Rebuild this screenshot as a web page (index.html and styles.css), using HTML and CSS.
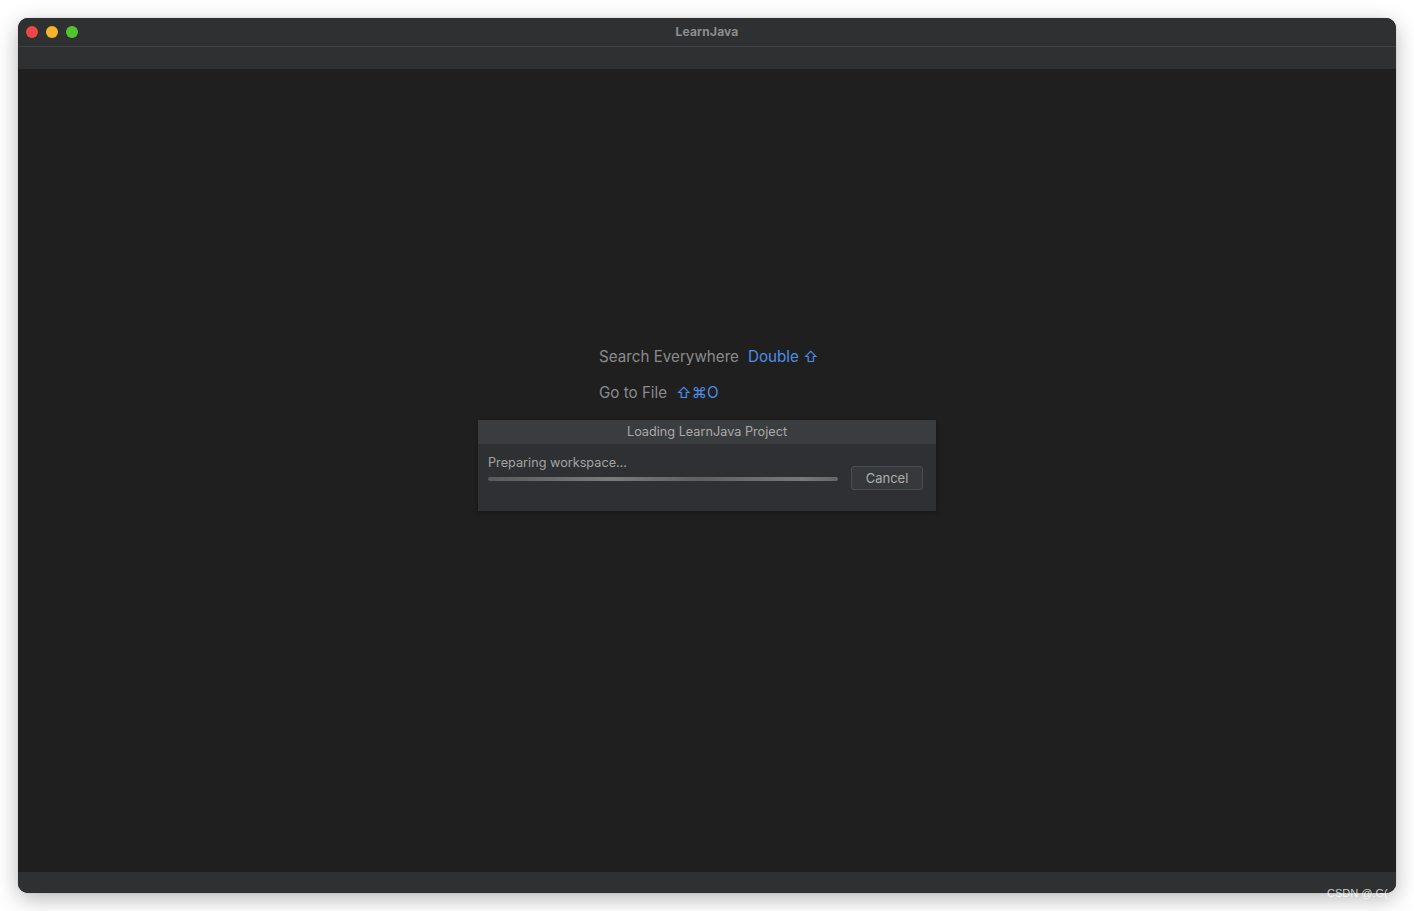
FILE: index.html
```html
<!DOCTYPE html>
<html>
<head>
<meta charset="utf-8">
<link rel="stylesheet" href="styles.css">
</head>
<body>
<div class="window">
  <div class="titlebar">
    <div class="lights">
      <span class="light red"></span>
      <span class="light yellow"></span>
      <span class="light green"></span>
    </div>
    <div class="title">LearnJava</div>
  </div>
  <div class="toolbar"></div>
  <div class="content">
    <div class="hints">
      <div class="hint"><span class="label">Search Everywhere</span><span class="key">Double ⇧</span></div>
      <div class="hint"><span class="label">Go to File</span><span class="key">⇧⌘O</span></div>
    </div>
    <div class="dialog">
      <div class="dialog-head">Loading LearnJava Project</div>
      <div class="dialog-body">
        <div class="progress-col">
          <div class="status">Preparing workspace...</div>
          <div class="bar"></div>
        </div>
        <button class="cancel">Cancel</button>
      </div>
    </div>
  </div>
  <div class="statusbar"></div>
</div>
<div class="watermark">CSDN @.G(</div>
</body>
</html>
```
FILE: styles.css
```css
html, body {
  margin: 0;
  padding: 0;
  background: #ffffff;
  width: 1414px;
  height: 911px;
  overflow: hidden;
  font-family: "Inter", "Liberation Sans", sans-serif;
}
body {
  padding: 18px;
  box-sizing: border-box;
  position: relative;
}
.window {
  width: 1378px;
  height: 875px;
  border-radius: 10px;
  overflow: hidden;
  display: flex;
  flex-direction: column;
  box-shadow: 0 6px 22px rgba(0,0,0,0.28), 0 0 1px rgba(0,0,0,0.4);
  background: #1f1f1f;
}
.titlebar {
  height: 28px;
  background: #2f3032;
  border-bottom: 1px solid #404143;
  position: relative;
  display: flex;
  align-items: center;
  justify-content: center;
  flex-shrink: 0;
}
.lights {
  position: absolute;
  left: 8px;
  top: 8px;
  display: flex;
  gap: 8px;
}
.light {
  width: 12px;
  height: 12px;
  border-radius: 50%;
  display: block;
}
.red { background: #ec4645; }
.yellow { background: #f6b42a; }
.green { background: #52c42e; }
.title {
  font-size: 12px;
  font-weight: 700;
  color: #8e8e8e;
  letter-spacing: 0.2px;
  margin-top: -1px;
}
.toolbar {
  height: 22px;
  background: #2f3032;
  flex-shrink: 0;
}
.content {
  flex: 1;
  background: #1f1f1f;
  display: flex;
  flex-direction: column;
  align-items: center;
  padding-top: 277px;
}
.hints {
  display: flex;
  flex-direction: column;
  gap: 14px;
  width: 216px;
}
.hint {
  font-size: 15.2px;
  line-height: 22px;
  color: #8a8b8c;
  white-space: nowrap;
}
.label { margin-right: 9px; }
.key { color: #4d8ee6; }
.dialog {
  margin-top: 16px;
  width: 458px;
  height: 91px;
  background: #2e3033;
  box-shadow: 0 1px 4px rgba(0,0,0,0.35);
  display: flex;
  flex-direction: column;
}
.dialog-head {
  height: 24px;
  background: #3a3d40;
  color: #a9a9a9;
  font-size: 12.7px;
  line-height: 24px;
  text-align: center;
}
.dialog-body {
  display: flex;
  align-items: flex-start;
  padding: 11px 13px 0 10px;
  gap: 13px;
}
.progress-col {
  width: 350px;
}
.status {
  color: #a3a3a3;
  font-size: 12.7px;
  line-height: 16px;
}
.bar {
  margin-top: 6px;
  height: 4px;
  border-radius: 2px;
  background: linear-gradient(90deg, #5a5a5a, #7a7a7a 35%, #606060 60%, #787878 90%, #666);
}
.cancel {
  margin-top: 11px;
  width: 72px;
  height: 24px;
  background: #36393c;
  border: 1px solid #4a4d50;
  border-radius: 3px;
  color: #aeaeae;
  font-family: "Inter", "Liberation Sans", sans-serif;
  font-size: 13px;
  padding: 0;
}
.statusbar {
  height: 21px;
  background: #2f3032;
  flex-shrink: 0;
}
.watermark {
  position: absolute;
  left: 1327px;
  top: 887px;
  font-size: 11px;
  color: rgba(255,255,255,0.75);
  font-family: "Liberation Sans", sans-serif;
  white-space: nowrap;
}
```
